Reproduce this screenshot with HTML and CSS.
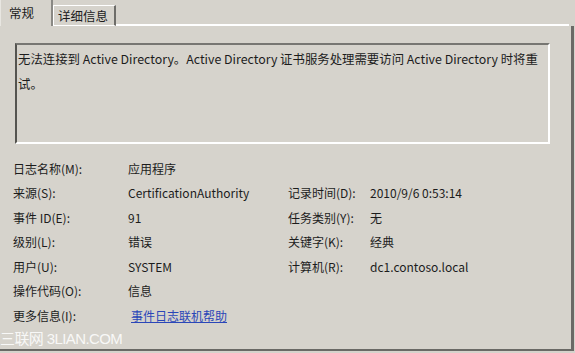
FILE: index.html
```html
<!DOCTYPE html>
<html lang="zh-CN">
<head>
<meta charset="utf-8">
<link rel="stylesheet" href="styles.css">
</head>
<body>
<div class="window">
  <div class="tabs">
    <div class="tab active">常规</div>
    <div class="tab">详细信息</div>
    <div class="tab-fill"></div>
  </div>
  <div class="panel">
    <div class="message">无法连接到 Active Directory。Active Directory 证书服务处理需要访问 Active Directory 时将重试。</div>
    <div class="fields">
      <div class="label">日志名称(M):</div><div class="value span3">应用程序</div>
      <div class="label">来源(S):</div><div class="value">CertificationAuthority</div><div class="label">记录时间(D):</div><div class="value">2010/9/6 0:53:14</div>
      <div class="label">事件 ID(E):</div><div class="value">91</div><div class="label">任务类别(Y):</div><div class="value">无</div>
      <div class="label">级别(L):</div><div class="value">错误</div><div class="label">关键字(K):</div><div class="value">经典</div>
      <div class="label">用户(U):</div><div class="value">SYSTEM</div><div class="label">计算机(R):</div><div class="value">dc1.contoso.local</div>
      <div class="label">操作代码(O):</div><div class="value span3">信息</div>
      <div class="label">更多信息(I):</div><div class="value span3"><a class="link" href="#">事件日志联机帮助</a></div>
    </div>
    <div class="watermark">三联网 3LIAN.COM</div>
  </div>
</div>
</body>
</html>
```
FILE: styles.css
```css
html, body {
  margin: 0;
  padding: 0;
  background: #d6d3cc;
}
body {
  width: 575px;
  height: 353px;
  overflow: hidden;
  font-family: "Noto Sans CJK SC", "Noto Sans", sans-serif;
  font-size: 12px;
  color: #1c1c1c;
}
.window {
  width: 574px;
  height: 351px;
  display: flex;
  flex-direction: column;
}
.tabs {
  display: flex;
  align-items: flex-end;
  height: 26px;
  flex: none;
}
.tab {
  box-sizing: border-box;
  height: 21px;
  padding: 0 6px 0 4px;
  line-height: 19px;
  border-top: 1px solid #ffffff;
  border-left: 1px solid #ffffff;
  border-right: 2px solid #6e6d69;
  border-bottom: 1px solid #ffffff;
  font-size: 12.5px;
}
.tab.active {
  height: 26px;
  width: 53px;
  padding: 2px 0 0 8px;
  line-height: 22px;
  border-top: none;
  border-left: 1px solid #e8e6e1;
  border-bottom: none;
  border-right: 2px solid #8a8985;
}
.tab-fill {
  flex: 1;
  border-bottom: 2px solid #ffffff;
  margin-right: 5px;
}
.panel {
  flex: 1;
  position: relative;
  border-right: 3px solid #6a6965;
  border-bottom: 2px solid #6a6965;
  padding: 17px 0 0 15px;
}
.message {
  box-sizing: border-box;
  width: 535px;
  height: 101px;
  border-top: 2px solid #777672;
  border-left: 2px solid #555450;
  border-right: 2px solid #ffffff;
  border-bottom: 2px solid #ffffff;
  padding: 2px 0 0 1px;
  line-height: 25px;
  font-size: 12.4px;
}
.fields {
  display: grid;
  grid-template-columns: 115px 160px 82px 1fr;
  grid-auto-rows: 24.5px;
  align-items: center;
  margin: 12px 0 0 -2px;
}
.label, .value {
  white-space: nowrap;
}
.span3 {
  grid-column: 2 / span 3;
}
.link {
  color: #2a46b8;
  text-decoration: underline;
  margin-left: 3px;
}
.watermark {
  position: absolute;
  left: 0;
  bottom: 1px;
  color: #ffffff;
  font-family: "Liberation Sans", "Noto Sans CJK SC", sans-serif;
  font-size: 15px;
  letter-spacing: -0.6px;
  opacity: 0.85;
}
```
